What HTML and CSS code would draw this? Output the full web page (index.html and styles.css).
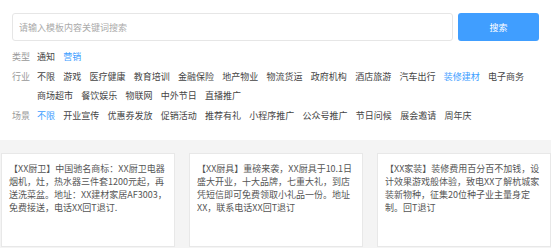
FILE: index.html
```html
<!DOCTYPE html>
<html lang="zh-CN">
<head>
  <meta charset="UTF-8" />
  <meta name="viewport" content="width=device-width, initial-scale=1.0"/>
  <title>短信模板</title>
  <link rel="stylesheet" href="styles.css">
</head>
<body>
  <div class="top">
    <div class="search">
      <input type="text" class="search-input" placeholder="请输入模板内容关键词搜索">
      <button type="button" class="search-btn">搜索</button>
    </div>

    <div class="filters">
      <div class="filter-row">
        <div class="filter-label">类型</div>
        <div class="filter-items">
          <span class="item">通知</span>
          <span class="item active">营销</span>
        </div>
      </div>
      <div class="filter-row">
        <div class="filter-label">行业</div>
        <div class="filter-items">
          <span class="item">不限</span>
          <span class="item">游戏</span>
          <span class="item">医疗健康</span>
          <span class="item">教育培训</span>
          <span class="item">金融保险</span>
          <span class="item">地产物业</span>
          <span class="item">物流货运</span>
          <span class="item">政府机构</span>
          <span class="item">酒店旅游</span>
          <span class="item">汽车出行</span>
          <span class="item active">装修建材</span>
          <span class="item">电子商务</span>
          <span class="item">商场超市</span>
          <span class="item">餐饮娱乐</span>
          <span class="item">物联网</span>
          <span class="item">中外节日</span>
          <span class="item">直播推广</span>
        </div>
      </div>
      <div class="filter-row">
        <div class="filter-label">场景</div>
        <div class="filter-items">
          <span class="item active">不限</span>
          <span class="item">开业宣传</span>
          <span class="item">优惠券发放</span>
          <span class="item">促销活动</span>
          <span class="item">推荐有礼</span>
          <span class="item">小程序推广</span>
          <span class="item">公众号推广</span>
          <span class="item">节日问候</span>
          <span class="item">展会邀请</span>
          <span class="item">周年庆</span>
        </div>
      </div>
    </div>
  </div>

  <div class="templates">
    <div class="tpl-card">【XX厨卫】中国驰名商标：XX厨卫电器烟机，灶，热水器三件套1200元起，再送洗菜盆。地址：XX建材家居AF3003，免费接送，电话XX回T退订.</div>
    <div class="tpl-card">【XX厨具】重磅来袭，XX厨具于10.1日盛大开业，十大品牌，七重大礼，到店凭短信即可免费领取小礼品一份。地址XX，联系电话XX回T退订</div>
    <div class="tpl-card">【XX家装】装修费用百分百不加钱，设计效果游戏般体验，致电XX了解杭城家装新物种，征集20位种子业主量身定制。回T退订</div>
  </div>
</body>
</html>
```

FILE: styles.css
```css
body {
  margin: 0;
  font-family: "Noto Sans CJK SC", "Noto Sans", sans-serif;
  font-size: 9px;
  color: #444;
  background: #fff;
  overflow: hidden;
}

.top {
  padding: 13px 12px 0;
}

.search {
  display: flex;
  gap: 5px;
  height: 28px;
}

.search-input {
  flex: 1;
  box-sizing: border-box;
  height: 28px;
  margin: 0;
  padding: 0 6px;
  border: 1px solid #e6e6e6;
  border-radius: 3px;
  font-family: inherit;
  font-size: 9px;
  color: #333;
  outline: none;
}

.search-input::placeholder {
  color: #aaa;
}

.search-btn {
  width: 81px;
  height: 28px;
  margin: 0;
  border: none;
  border-radius: 3px;
  background: #409eff;
  color: #fff;
  font-family: inherit;
  font-size: 9px;
  cursor: pointer;
}

.filters {
  margin-top: 6px;
  line-height: 19.5px;
}

.filter-row {
  display: flex;
}

.filter-label {
  flex: none;
  width: 25px;
  color: #999;
}

.filter-items {
  flex: 1;
  display: flex;
  flex-wrap: wrap;
  column-gap: 8.25px;
}

.item {
  cursor: pointer;
  white-space: nowrap;
}

.item.active {
  color: #409eff;
}

.templates {
  margin-top: 15px;
  background: #f4f4f4;
  padding: 13px 0 1px 1px;
  display: grid;
  grid-template-columns: repeat(3, 1fr);
  gap: 14px;
}

.tpl-card {
  box-sizing: border-box;
  height: 94px;
  padding: 8px 7px;
  background: #fff;
  border: 1px solid #e8e8e8;
  line-height: 13.1px;
  color: #555;
}
```
